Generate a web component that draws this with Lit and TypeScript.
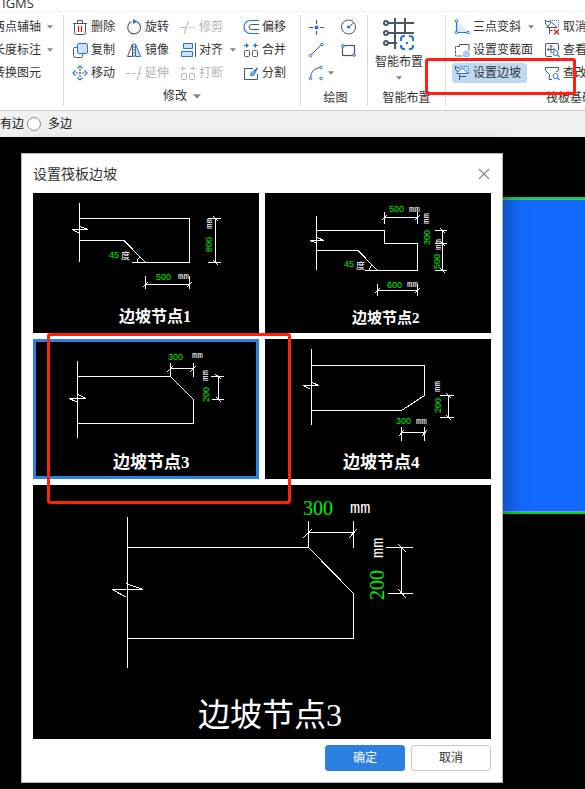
import { LitElement, html, svg, css, nothing } from "lit";
import type { TemplateResult } from "lit";
import { customElement, property, state } from "lit/decorators.js";
import { classMap } from "lit/directives/class-map.js";

const INK = "#4b566b";
const BLUE = "#1f74e0";
const PALE = "#cfe1f7";
const MUTED = "#b4b4b4";

/* ---------- toolbar icons, drawn on a 16 x 16 grid ---------- */
const icons: Record<string, TemplateResult> = {
  remove: svg`<g fill="none" stroke=${INK}><path d="M1 4.500h14M5.500 4V1.500h5V4M2.500 4.500v9q0 2 2 2h7q2 0 2-2v-9"/><path d="M6.500 7v6M9.500 7v6" stroke="#e02020" stroke-width="1.300"/></g>`,
  copy: svg`<path d="M5 5.500H2.500q-1 0-1 1v7q0 2 2 2h6q1 0 1-1V12" fill="none" stroke=${INK}/><rect x="5.500" y="1.500" width="10" height="10" rx="1.500" fill=${PALE} stroke=${BLUE}/>`,
  move: svg`<g fill="none" stroke=${BLUE} stroke-width="1.200"><path d="M5.500 3.500L8 1l2.500 2.500M5.500 12.500L8 15l2.500-2.500M3.500 5.500L1 8l2.500 2.500M12.500 5.500L15 8l-2.500 2.500"/></g><path d="M8 4v2M8 10v2M4 8h2M10 8h2M8 7v2M7 8h2" stroke=${INK} stroke-width="1.200"/>`,
  rotate: svg`<path d="M5.500 2.600A6.400 6.400 0 1 0 11 2.700" fill="none" stroke=${INK} stroke-width="1.100"/><path d="M7 0l4.500 2.500L7 5z" fill=${BLUE}/>`,
  mirror: svg`<path d="M6.500 2v12.500H1.500z" fill="none" stroke=${INK}/><path d="M9.500 2v12.500h5z" fill=${PALE} stroke=${BLUE}/><path d="M8 1v14" stroke=${INK} stroke-dasharray="2 1"/>`,
  extend: svg`<path d="M0 8.500h4M6 8.500h4M12 8.500h3M11 15L15 1" fill="none" stroke=${MUTED}/>`,
  trim: svg`<path d="M0 8.500h7M9 8.500h2M13 8.500h2M4 15L8.500 2" fill="none" stroke=${MUTED}/>`,
  align: svg`<path d="M3.500 1.500h9v5h-9zM1.500 9.500h11v5h-11z" fill=${PALE} stroke=${BLUE}/><path d="M15.500 1v14" stroke=${INK}/>`,
  split: svg`<g fill="none" stroke=${MUTED}><rect x="1.500" y="8.500" width="5" height="6" rx="1"/><rect x="9.500" y="8.500" width="5" height="6" rx="1"/><path d="M6 3.500H1.500M3.500 1.500l-2 2 2 2M10 3.500h4.500M12.500 1.500l2 2-2 2"/></g>`,
  offset: svg`<path d="M16 1.500H7.500a6.500 6.500 0 0 0 0 13H16" fill="none" stroke=${BLUE} stroke-width="1.200"/><path d="M16 5.500H8.500a2.500 2.500 0 0 0 0 5H16" fill="none" stroke=${INK}/>`,
  merge: svg`<g fill="none" stroke=${INK}><rect x="1.500" y="8.500" width="5" height="6" rx="1"/><rect x="9.500" y="8.500" width="5" height="6" rx="1"/></g><path d="M1 3.500h4M15 3.500h-4" stroke=${BLUE}/><path d="M3 1l3 2.500L3 6zM13 1l-3 2.500L13 6z" fill=${BLUE}/>`,
  cut: svg`<path d="M10 3.500H1.500v11h13V9" fill="none" stroke=${INK}/><path d="M14.500 3L8 8l-.5 2.500L11 10zM9 10l5.500-7" fill=${PALE} stroke=${BLUE}/>`,
  point: svg`<path d="M8.500 1v4M8.500 12v4M1 8.500h4M12 8.500h4" stroke=${INK} stroke-width="1.100"/><circle cx="8.500" cy="8.500" r="2" fill=${BLUE}/>`,
  circle: svg`<circle cx="8.500" cy="8" r="7" fill="none" stroke=${INK}/><path d="M8.500 8l5-4" stroke=${INK}/><circle cx="8.500" cy="8" r="1.500" fill=${BLUE}/>`,
  line: svg`<path d="M3 13L13 3" stroke=${INK}/><g fill="#fff" stroke=${BLUE}><circle cx="2.500" cy="13.500" r="1.300"/><circle cx="14" cy="2.500" r="1.300"/></g>`,
  rect: svg`<rect x="2.500" y="3.500" width="12" height="10" fill="none" stroke=${INK} stroke-width="1.200"/><g fill="#fff" stroke=${BLUE}><circle cx="3" cy="4" r="1.300"/><circle cx="14" cy="13" r="1.300"/></g>`,
  arc: svg`<path d="M2.500 13Q3 3.500 12 2.500" fill="none" stroke=${INK}/><g fill="#fff" stroke=${BLUE}><circle cx="2.500" cy="13.500" r="1.300"/><circle cx="13" cy="2.500" r="1.300"/><circle cx="13" cy="13.500" r="1.300"/></g>`,
  slant: svg`<path d="M2.500 2v11.500H15z" fill="#dcebfb"/><path d="M2.500 2v11.500H14" fill="none" stroke=${BLUE} stroke-width="1.200"/><g fill="#fff" stroke=${BLUE}><circle cx="2.500" cy="2" r="1.300"/><circle cx="2.500" cy="13.500" r="1.300"/><circle cx="14" cy="13.500" r="1.300"/></g>`,
  section: svg`<path d="M5.500 4.500H1.500v9.500H9" fill="none" stroke=${INK} stroke-dasharray="3 1"/><path d="M5.500 4.500v-2h9.500v6" fill="none" stroke=${INK}/><circle cx="12.500" cy="12" r="3" fill=${PALE} stroke="#7fb0ee"/><circle cx="12.500" cy="12" r="1" fill="none" stroke="#7fb0ee"/>`,
  slope: svg`<path d="M1.500 1v3.500l4 4.500v6M5.500 11.500h6.500M1.500 1.500l4 2" fill="none" stroke=${INK}/><path d="M2.500 8.500L8.500 3l5.500 5.500z" fill="#fff" stroke=${BLUE}/><path d="M6 1.500h8.500v7" fill="none" stroke=${BLUE} stroke-dasharray="1 1"/>`,
  unslope: svg`<path d="M1.500 1v4l4 4v6M5.500 11.500h3M1.500 2l6 1M2.500 8.500L7.500 3l5.500 5.500z" fill="none" stroke=${INK}/><path d="M6 1.500h8.500v7" fill="none" stroke=${BLUE} stroke-dasharray="1 1"/><path d="M10 10.500l5 5M15 10.500l-5 5" stroke="#e02020" stroke-width="1.300"/>`,
  view: svg`<path d="M8 14.500H3q-1.500 0-1.500-1.500V3Q1.500 1.500 3 1.500h10q1.500 0 1.500 1.500v5" fill="none" stroke=${INK}/><path d="M7 3.500v8M3.500 7.500h7M5.500 5L7 3.500 8.500 5M4.500 6L3.500 7.500l1 1.500M9.500 6l1.500 1.500" fill="none" stroke=${INK}/><circle cx="11.500" cy="11" r="2.500" fill="#fff" stroke=${BLUE}/><path d="M13.500 13l2 2" stroke=${BLUE} stroke-width="1.300"/>`,
  modify: svg`<path d="M8 14.500H5l.5-5L1.500 5.500v-3h13v3L12 7" fill="none" stroke=${INK}/><circle cx="11.500" cy="11" r="2.500" fill="#fff" stroke=${BLUE}/><path d="M13.500 13l2 2" stroke=${BLUE} stroke-width="1.300"/>`,
};

const icon = (name: string) =>
  html`<svg class="icon" viewBox="0 0 16 16" aria-hidden="true">${icons[name]}</svg>`;
const caret = html`<svg class="caret" viewBox="0 0 7 4" aria-hidden="true"><path d="M0 0h7L3.500 4z" fill="#858585" /></svg>`;

/* ---------- slope detail drawings ---------- */
interface Mark { x: number; y: number; text: string; kind: "num" | "unit" | "deg"; up?: boolean }
interface Detail {
  id: number;
  title: { x: number; y: number; size: number };
  lines: string;
  marks: Mark[];
}

const details: Detail[] = [
  {
    id: 1,
    title: { x: 86, y: 129, size: 16 },
    lines:
      "M46.500 10V69M46.500 25.500H156.500V69.500H99M46.500 47.500H91L112.500 69.500M39 36.500H55L47 33.500M39 36.500L46 40M104 69.500Q104 66 107 64" +
      "M112.500 83V96M156.500 83V96M112.500 91.500H156.500M110 94L115 89M154 94L159 89" +
      "M182.500 25.500V69.500M175 25.500H188M175 69.500H188M180 23L185 28M180 67L185 72",
    marks: [
      { x: 76, y: 65, text: "45", kind: "num" },
      { x: 88, y: 66, text: "度", kind: "deg" },
      { x: 123, y: 87, text: "500", kind: "num" },
      { x: 145, y: 86, text: "mm", kind: "unit" },
      { x: 179, y: 36, text: "mm", kind: "unit", up: true },
      { x: 179, y: 59, text: "800", kind: "num", up: true },
    ],
  },
  {
    id: 2,
    title: { x: 87, y: 130, size: 15 },
    lines:
      "M51.500 23V77M51.500 37.500H119.500V50.500H152.500V77.500H100M51.500 57.500H93L112.500 77.500M45 47.500H59L52 44.500M45 47.500L52 50M104.500 77Q104.500 74 107 72" +
      "M119.500 19V31M152.500 19V31M119.500 24.500H152.500M117 27L122 22M150 27L155 22" +
      "M112.500 91V103M152.500 91V103M112.500 97.500H152.500M110 100L115 95M150 100L155 95" +
      "M177.500 37.500V77.500M170 37.500H182M170 50.500H182M170 77.500H182M175 35L180 40M175 48L180 53M175 75L180 80",
    marks: [
      { x: 79, y: 74, text: "45", kind: "num" },
      { x: 91, y: 76, text: "度", kind: "deg" },
      { x: 124, y: 19, text: "500", kind: "num" },
      { x: 144, y: 19, text: "mm", kind: "unit" },
      { x: 164, y: 31, text: "mm", kind: "unit", up: true },
      { x: 165, y: 52, text: "300", kind: "num", up: true },
      { x: 176, y: 57, text: "mm", kind: "unit", up: true },
      { x: 175, y: 76, text: "500", kind: "num", up: true },
      { x: 122, y: 95, text: "600", kind: "num" },
      { x: 142, y: 94, text: "mm", kind: "unit" },
    ],
  },
  {
    id: 3,
    title: { x: 80, y: 129, size: 17 },
    lines:
      "M44.500 22V99M44.500 37.500H137.500L160.500 60.500V84.500H44.500M36 59.500H53L45 55.500M36 59.500L44 63" +
      "M137.500 24V37.500M160.500 24V38M137.500 29.500H160.500M134 33L140 27M157 33L163 27" +
      "M185.500 37.500V60.500M178 37.500H191M179 60.500H191M182 35L188 40M183 58L188 63",
    marks: [
      { x: 135, y: 21, text: "300", kind: "num" },
      { x: 159, y: 19, text: "mm", kind: "unit" },
      { x: 175, y: 42, text: "mm", kind: "unit", up: true },
      { x: 176, y: 63, text: "200", kind: "num", up: true },
    ],
  },
  {
    id: 4,
    title: { x: 78, y: 129, size: 17 },
    lines:
      "M46.500 10V86M46.500 26.500H159.500V56.500L136.500 71.500H46.500M38 46.500H54L47 43.500M38 46.500L45 50" +
      "M136.500 88V102M159.500 88V102M136.500 93.500H159.500M134 97L139 91M157 97L162 91" +
      "M183.500 56.500V78.500M175 56.500H189M175 78.500H189M181 54L186 59M181 76L186 81",
    marks: [
      { x: 131, y: 85, text: "300", kind: "num" },
      { x: 151, y: 85, text: "mm", kind: "unit" },
      { x: 175, y: 53, text: "mm", kind: "unit", up: true },
      { x: 176, y: 74, text: "200", kind: "num", up: true },
    ],
  },
];

const preview: Detail = {
  id: 3,
  title: { x: 165, y: 241, size: 32 },
  lines:
    "M94.500 32V183M94.500 62.500H275.500L320.500 108.500V153.500H94.500M79 104.500H110L93 98.500M79 104.500L93 112" +
    "M275.500 36V63M320.500 36V63M275.500 47.500H320.500M270 53L279 44M316 53L324 44" +
    "M368.500 62.500V108.500M353 62.500H380M355 108.500H380M365 59L373 67M365 104L373 113",
  marks: [
    { x: 270, y: 30, text: "300", kind: "num" },
    { x: 317, y: 28, text: "mm", kind: "unit" },
    { x: 350, y: 73, text: "mm", kind: "unit", up: true },
    { x: 351, y: 115, text: "200", kind: "num", up: true },
  ],
};

@customElement("slope-drawing")
export class SlopeDrawing extends LitElement {
  @property({ attribute: false }) detail!: Detail;
  @property({ type: Boolean, reflect: true }) large = false;

  static styles = css`
    :host { display: block; background: #000; }
    svg { display: block; width: 100%; height: auto; }
    .lines { fill: none; stroke: #fff; stroke-width: 1; shape-rendering: crispEdges; }
    .num { fill: #00f000; font: 9px "Liberation Sans", sans-serif; }
    .unit { fill: #fff; font: 9px "Liberation Mono", monospace; }
    .deg { fill: #fff; font: 9px "Noto Sans CJK SC", sans-serif; }
    .title { fill: #fff; font-family: "Liberation Serif", "Noto Sans CJK SC", serif; font-weight: 700; }
    :host([large]) .num { font: 20px "Liberation Serif", serif; }
    :host([large]) .unit { font-size: 17px; }
    :host([large]) .title { font-weight: 400; }
  `;

  render() {
    const { id, title, lines, marks } = this.detail;
    return html`
      <svg viewBox=${this.large ? "0 0 458 254" : "0 0 226 140"} role="img" aria-label=${`边坡节点${id}`}>
        <path class="lines" d=${lines} />
        ${marks.map(
          (m) => svg`<text class=${m.kind} transform=${`translate(${m.x} ${m.y}) rotate(${m.up ? -90 : 0})`}>${m.text}</text>`,
        )}
        <text class="title" x=${title.x} y=${title.y} font-size=${title.size}>边坡节点${id}</text>
      </svg>
    `;
  }
}

interface Tool { icon?: string; label?: string; name?: string; off?: boolean; menu?: boolean; on?: boolean }

const editTools: Tool[] = [
  { icon: "remove", label: "删除" }, { icon: "rotate", label: "旋转" },
  { icon: "trim", label: "修剪", off: true }, { icon: "offset", label: "偏移" },
  { icon: "copy", label: "复制" }, { icon: "mirror", label: "镜像" },
  { icon: "align", label: "对齐", menu: true }, { icon: "merge", label: "合并" },
  { icon: "move", label: "移动" }, { icon: "extend", label: "延伸", off: true },
  { icon: "split", label: "打断", off: true }, { icon: "cut", label: "分割" },
];
const drawTools: Tool[] = [
  { icon: "point", name: "点" }, { icon: "circle", name: "圆" },
  { icon: "line", name: "直线" }, { icon: "rect", name: "矩形" },
  { icon: "arc", name: "弧", menu: true },
];
const raftTools: Tool[] = [
  { icon: "slant", label: "三点变斜", menu: true }, { icon: "unslope", label: "取消" },
  { icon: "section", label: "设置变截面" }, { icon: "view", label: "查看" },
  { icon: "slope", label: "设置边坡", on: true }, { icon: "modify", label: "查改" },
];

@customElement("app-root")
export class AppRoot extends LitElement {
  @state() private selected = 3;

  static styles = css`
    :host {
      display: flex; flex-direction: column; min-height: 100vh; overflow: hidden;
      background: #000; color: #333;
      font: 12px/16px "Liberation Sans", "Noto Sans CJK SC", sans-serif;
    }
    * { box-sizing: border-box; }
    button { margin: 0; padding: 0; border: 0; background: none; color: inherit; font: inherit; white-space: nowrap; }
    .icon { width: 16px; height: 16px; flex: none; }
    .caret { width: 6px; height: 4px; flex: none; }

    .titlebar {
      display: flex; align-items: flex-end; height: 12px; padding: 0 2px; overflow: hidden;
      background: #fff; border-bottom: 1px solid #f0f0f0;
      font: 13px/16px "Open Sans", sans-serif;
    }
    .ribbon { display: flex; height: 99px; padding: 3px 0 4px; background: #fff; border-bottom: 1px solid #d0d0d0; overflow: hidden; }
    .group { display: flex; flex-direction: column; flex: none; border-right: 1px solid #d9d9d9; }
    .caption { display: flex; justify-content: center; align-items: center; gap: 6px; height: 22px; margin-top: auto; padding-top: 6px; }
    button.caption { padding-top: 2px; }
    button.caption .caret { width: 8px; height: 5px; }
    .grid { display: grid; grid-auto-rows: 23px; align-items: center; justify-items: start; }
    .tool { display: flex; align-items: center; gap: 3px; height: 20px; }
    .tool .caret { margin-left: 4px; }
    .tool[disabled] { color: #b4b4b4; }
    .tool.on { background: #c0d9f2; border-radius: 3px; }

    .axis { width: 64px; align-items: flex-end; }
    .axis .grid { padding-right: 10px; }
    .axis .caret { margin-left: 3px; }
    .edit { width: 237px; padding: 0 8px; }
    .edit .grid { grid-template-columns: 54px 54px 63px auto; }
    .draw { width: 67px; padding: 0 4px 0 7px; }
    .draw .grid { grid-template-columns: 32px auto; }
    .draw .caret { margin-left: 1px; }
    .smart { width: 78px; }
    .smart-main { display: flex; flex-direction: column; align-items: center; gap: 2px; width: 62px; padding-top: 1px; }
    .smart-main .big { width: 32px; height: 36px; }
    .smart-main .caret { margin-top: 4px; }
    .raft { position: relative; width: 200px; border: 0; }
    .raft .grid { grid-template-columns: 90px auto; padding-left: 6px; }
    .raft .tool { padding: 0 6px 0 2px; }
    .raft .caption { justify-content: flex-start; padding-left: 100px; }

    .callout { position: absolute; border: 3px solid #ff2010; border-radius: 3px; pointer-events: none; }
    .callout-tool { left: -21px; top: 43px; width: 151px; height: 37px; }
    .callout-node { left: 14px; top: 140px; width: 244px; height: 171px; }

    .options { display: flex; align-items: center; gap: 3px; height: 26px; background: #f1f1f1; color: #111; }
    .choice { display: flex; align-items: center; gap: 7px; }
    .choice.cut { justify-content: flex-end; width: 24px; overflow: hidden; white-space: nowrap; }
    input[type="radio"] { appearance: none; flex: none; width: 14px; height: 14px; margin: 0; border: 1px solid #8a8a8a; border-radius: 50%; background: #fff; }

    .canvas { position: relative; flex: 1; padding: 16px 82px 6px 21px; }
    .slab {
      position: absolute; right: 0; top: 60px; width: 120px; height: 317px;
      background: #146aff; border: solid #00e010; border-width: 2px 0; box-shadow: inset 0 1px #6f9be8, inset 0 -1px #6f9be8;
    }
    .dialog {
      position: relative; padding: 0 11px 11px; background: #fff;
      border: 1px solid #b8b8b8; box-shadow: 0 0 24px rgba(0, 0, 0, 0.45);
    }
    .head { display: flex; align-items: center; justify-content: space-between; height: 39px; }
    h1 { margin: 0; font-size: 14px; line-height: 20px; font-weight: 400; }
    .close { display: grid; place-items: center; width: 14px; height: 14px; }
    .close svg { width: 12px; height: 12px; }
    .nodes { position: relative; display: grid; grid-template-columns: 1fr 1fr; gap: 6px; }
    .node { position: relative; display: block; }
    .node.selected::after { content: ""; position: absolute; inset: 0; border: 3px solid #2b80e2; }
    .wide { grid-column: 1 / -1; }
    .actions { display: flex; justify-content: flex-end; gap: 6px; padding-top: 6px; }
    .action { width: 80px; height: 26px; border: 1px solid #c8c8c8; border-radius: 3px; background: #fff; }
    .action.primary { border-color: #2b80e2; background: #2b80e2; color: #fff; }
  `;

  private tool(t: Tool) {
    return html`<button class=${classMap({ tool: true, on: !!t.on })} ?disabled=${!!t.off} aria-label=${t.name ?? nothing}>
      ${t.icon ? icon(t.icon) : nothing}${t.label ? html`<span>${t.label}</span>` : nothing}${t.menu ? caret : nothing}
    </button>`;
  }

  render() {
    return html`
      <header class="titlebar">IGMS</header>
      <nav class="ribbon">
        <section class="group axis">
          <div class="grid">
            ${this.tool({ label: "两点辅轴", menu: true })}
            ${this.tool({ label: "长度标注", menu: true })}
            ${this.tool({ label: "转换图元" })}
          </div>
        </section>
        <section class="group edit">
          <div class="grid">${editTools.map((t) => this.tool(t))}</div>
          <button class="caption">修改 ${caret}</button>
        </section>
        <section class="group draw">
          <div class="grid">${drawTools.map((t) => this.tool(t))}</div>
          <div class="caption">绘图</div>
        </section>
        <section class="group smart">
          <button class="smart-main">
            <svg class="big" viewBox="0 0 32 36" aria-hidden="true">
              <g fill="none" stroke=${INK} stroke-width="2">
                <path d="M5 7h26M5 17h26M5 27h9M12 2v31M22 2v14" />
                <circle cx="3" cy="7" r="2" /><circle cx="3" cy="17" r="2" /><circle cx="3" cy="27" r="2" />
              </g>
              <rect x="16" y="19" width="16" height="16" fill="#fff" />
              <path d="M18 25v-2q0-3 3-3h1M26 20h1q3 0 3 3v2M30 29v1q0 3-3 3h-1M22 33h-1q-3 0-3-3v-1" fill="none" stroke=${BLUE} stroke-width="2" />
              <rect x="23" y="26" width="2" height="2" fill=${BLUE} />
            </svg>
            <span>智能布置</span>
            ${caret}
          </button>
          <div class="caption">智能布置</div>
        </section>
        <section class="group raft">
          <div class="grid">${raftTools.map((t) => this.tool(t))}</div>
          <div class="caption">筏板基础</div>
          <div class="callout callout-tool"></div>
        </section>
      </nav>
      <div class="options">
        <label class="choice cut"><input type="radio" name="edges" value="all" />所有边</label>
        <label class="choice"><input type="radio" name="edges" value="multi" />多边</label>
      </div>
      <main class="canvas">
        <div class="slab"></div>
        <div class="dialog" role="dialog" aria-labelledby="dialog-title">
          <div class="head">
            <h1 id="dialog-title">设置筏板边坡</h1>
            <button class="close" aria-label="关闭">
              <svg viewBox="0 0 12 12"><path d="M1 1l10 10M11 1L1 11" stroke="#8c8c8c" stroke-width="1.200" /></svg>
            </button>
          </div>
          <div class="nodes">
            ${details.map(
              (d) => html`<button
                class=${classMap({ node: true, selected: d.id === this.selected })}
                aria-pressed=${d.id === this.selected ? "true" : "false"}
                @click=${() => (this.selected = d.id)}
              ><slope-drawing .detail=${d}></slope-drawing></button>`,
            )}
            <slope-drawing class="wide" large .detail=${preview}></slope-drawing>
            <div class="callout callout-node"></div>
          </div>
          <div class="actions">
            <button class="action primary">确定</button>
            <button class="action">取消</button>
          </div>
        </div>
      </main>
    `;
  }
}
